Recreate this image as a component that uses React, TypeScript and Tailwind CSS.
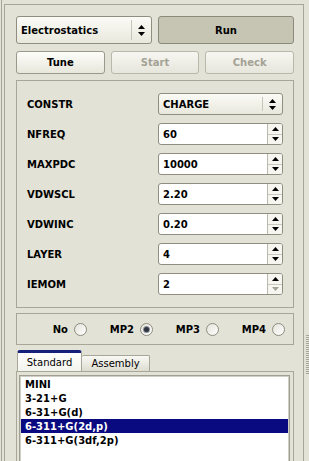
import { useState } from "react";

const params = [
    { label: "CONSTR", value: "CHARGE", kind: "combo" },
    { label: "NFREQ", value: "60" },
    { label: "MAXPDC", value: "10000" },
    { label: "VDWSCL", value: "2.20" },
    { label: "VDWINC", value: "0.20" },
    { label: "LAYER", value: "4" },
    { label: "IEMOM", value: "2", downDisabled: true },
];

const basisSets = ["MINI", "3-21+G", "6-31+G(d)", "6-311+G(2d,p)", "6-311+G(3df,2p)"];

function UpDown() {
    return (
        <svg width="7" height="11" viewBox="0 0 7 11">
            <path d="M3.5 0 L7 4 L0 4 Z" fill="#000" />
            <path d="M0 7 L7 7 L3.5 11 Z" fill="#000" />
        </svg>
    );
}

function Combo({ value, height }: { value: string; height: string }) {
    return (
        <div className={`flex ${height} rounded-[3px] border border-[#8f8e81] bg-gradient-to-b from-[#fbfbf7] to-[#e9e8dd]`}>
            <div className="flex flex-1 items-center pl-[4px] font-bold">{value}</div>
            <div className="my-[3px] border-l border-[#c6c5b9]" />
            <div className="flex w-[19px] items-center justify-center">
                <UpDown />
            </div>
        </div>
    );
}

function Spin({ value, downDisabled }: { value: string; downDisabled?: boolean }) {
    return (
        <div className="flex h-[22px] overflow-hidden rounded-[3px] border border-[#8f8e81] bg-white">
            <div className="flex flex-1 items-center pl-[4px] font-bold">{value}</div>
            <div className="flex w-[15px] flex-col border-l border-[#b9b8ac] bg-[#f6f5f0]">
                <div className="flex flex-1 items-center justify-center border-b border-[#c9c8bd]">
                    <svg width="7" height="4" viewBox="0 0 7 4">
                        <path d="M3.5 0 L7 4 L0 4 Z" fill="#000" />
                    </svg>
                </div>
                <div className="flex flex-1 items-center justify-center">
                    <svg width="7" height="4" viewBox="0 0 7 4">
                        <path d="M0 0 L7 0 L3.5 4 Z" fill={downDisabled ? "#a3a295" : "#000"} />
                    </svg>
                </div>
            </div>
        </div>
    );
}

function Radio({ label, checked }: { label: string; checked?: boolean }) {
    return (
        <div className="flex w-[66px] items-center justify-end gap-[6px]">
            <span className="font-bold">{label}</span>
            <span className="flex h-[13px] w-[13px] items-center justify-center rounded-full border border-[#8d8c7f] bg-gradient-to-br from-[#e4e3da] to-white">
                {checked && <span className="h-[5px] w-[5px] rounded-full bg-[#2e3440] shadow-[0_0_0_1px_#8a9099]" />}
            </span>
        </div>
    );
}

export default function App() {
    const [selected, setSelected] = useState(3);

    return (
        <div className="flex h-[461px] w-[309px] overflow-hidden bg-[#e3e2d6] font-['DejaVu_Sans',sans-serif] text-[10px] text-black">
            <div className="ml-[1px] flex-none border-l border-[#a7a699] pl-[2px] pt-[4px]">
                <div className="h-full w-[300px] border-l border-r border-t border-[#a7a699] pl-[11px] pr-[9px] pt-[11px]">
                    {/* Mode + run */}
                    <div className="grid grid-cols-2 gap-[6px]">
                        <Combo value="Electrostatics" height="h-[28px]" />
                        <button className="h-[28px] rounded-[3px] border border-[#8a897c] bg-[#c6c5b3] font-bold">Run</button>
                    </div>

                    <div className="mt-[7px] grid grid-cols-3 gap-[6px]">
                        <button className="h-[23px] rounded-[3px] border border-[#9a998c] bg-gradient-to-b from-[#fdfdfa] to-[#e8e7dc] font-bold">Tune</button>
                        <button className="h-[23px] rounded-[3px] border border-[#b9b8ab] bg-gradient-to-b from-[#f7f6f1] to-[#e7e6dc] font-bold text-[#a3a295]">Start</button>
                        <button className="h-[23px] rounded-[3px] border border-[#b9b8ab] bg-gradient-to-b from-[#f7f6f1] to-[#e7e6dc] font-bold text-[#a3a295]">Check</button>
                    </div>

                    {/* Parameters */}
                    <div className="mt-[6px] flex flex-col gap-[8px] border border-[#a7a699] px-[10px] py-[12px]">
                        {params.map((p) => (
                            <div key={p.label} className="flex h-[22px] items-center">
                                <span className="flex-1 font-bold">{p.label}</span>
                                <div className="w-[125px]">
                                    {p.kind === "combo" ? (
                                        <Combo value={p.value} height="h-[22px]" />
                                    ) : (
                                        <Spin value={p.value} downDisabled={p.downDisabled} />
                                    )}
                                </div>
                            </div>
                        ))}
                    </div>

                    {/* MP level */}
                    <div className="mt-[5px] flex h-[32px] items-center justify-end border border-[#a7a699] pr-[8px]">
                        <Radio label="No" />
                        <Radio label="MP2" checked />
                        <Radio label="MP3" />
                        <Radio label="MP4" />
                    </div>

                    {/* Tabs */}
                    <div className="mt-[6px] flex h-[20px] items-end pl-[1px]">
                        <div className="relative z-10 flex h-[21px] w-[65px] items-center justify-center rounded-t-[3px] border-l border-r border-t-[3px] border-[#a7a699] border-t-[#15207a] bg-gradient-to-b from-white to-[#f3f3ee]">
                            Standard
                        </div>
                        <div className="flex h-[16px] w-[68px] items-center justify-center rounded-t-[2px] border-r border-t border-[#a7a699] bg-gradient-to-b from-[#f9f9f5] to-[#dedcd0]">
                            Assembly
                        </div>
                    </div>
                    <div className="h-[100px] border border-[#a7a699] pl-[2px] pr-[3px] pt-[3px]">
                        <div className="border border-[#a09f92]">
                            <div className="h-[90px] border border-[#d0cfc4] bg-white">
                                {basisSets.map((b, i) => (
                                    <div
                                        key={b}
                                        onClick={() => setSelected(i)}
                                        className={`flex h-[14px] items-center pl-[4px] font-bold ${i === selected ? "bg-[#0a0a80] text-white" : ""}`}
                                    >
                                        {b}
                                    </div>
                                ))}
                            </div>
                        </div>
                    </div>
                </div>
            </div>

            {/* splitter grip */}
            <div className="flex-1 pl-[2px] pt-[335px]">
                <div className="h-[40px] w-[4px] bg-[repeating-linear-gradient(to_bottom,#a7a699_0px,#a7a699_1px,transparent_1px,transparent_2px)]" />
            </div>
        </div>
    );
}
